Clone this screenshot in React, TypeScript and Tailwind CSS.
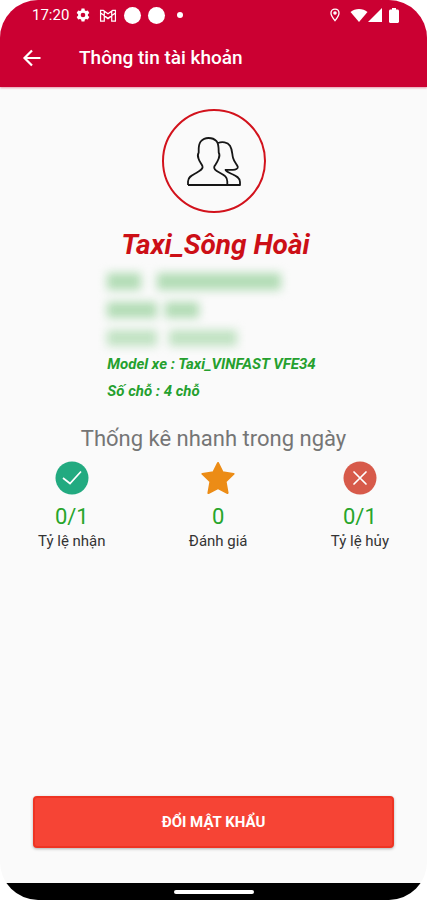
import type { ReactNode } from "react";

function StatusBar() {
  return (
    <div className="flex h-[30px] items-center pl-8 pr-7 text-white">
      <span className="text-[15px] leading-5">17:20</span>
      <svg viewBox="0 0 24 24" className="ml-[7px] h-[14px] w-[14px]" fill="currentColor">
        <path
          fillRule="evenodd"
          d="M9.500 1h5l.7 3.200 2 1.100 3.100-1 2.500 4.300-2.400 2.300v2.200l2.400 2.300-2.500 4.300-3.100-1-2 1.100-.7 3.200h-5l-.7-3.200-2-1.100-3.100 1-2.500-4.300 2.400-2.300v-2.200L1.200 8.600l2.500-4.300 3.100 1 2-1.100zM12 8a4 4 0 1 0 0 8 4 4 0 0 0 0-8z"
        />
      </svg>
      <svg viewBox="0 0 18 14" className="ml-[9px] h-[13px] w-[18px]" fill="none" stroke="currentColor" strokeWidth="1.300">
        <path d="M1 1.500v11.500h4V7.500l4 3 4-3V13h4V1.500h-3L9 5.200 4 1.500zM1.500 4.500 9 10l7.500-5.500M5 2.500v5M13 2.500v5" />
      </svg>
      <span className="ml-[7px] h-[17px] w-[17px] rounded-full bg-white" />
      <span className="ml-[7px] h-[17px] w-[17px] rounded-full bg-white" />
      <span className="ml-3 h-[6px] w-[6px] rounded-full bg-white" />

      <div className="ml-auto flex items-center">
        <svg viewBox="0 0 12 16" className="h-[14px] w-[12px]" fill="none" stroke="currentColor" strokeWidth="1.500">
          <path d="M6 1.200c-2.700 0-4.600 2-4.600 4.600C1.400 9 6 14.500 6 14.500S10.600 9 10.600 5.800c0-2.600-1.900-4.600-4.600-4.600z" />
          <circle cx="6" cy="5.800" r="1.300" fill="currentColor" />
        </svg>
        <svg viewBox="0 0 18 14" className="ml-[9px] h-[14px] w-[18px]" fill="currentColor">
          <path d="M.5 4C5 0 13 0 17.500 4L9 14z" />
        </svg>
        <svg viewBox="0 0 14 14" className="h-[14px] w-[14px]" fill="currentColor">
          <path d="M14 0v14H0z" />
        </svg>
        <svg viewBox="0 0 10 15" className="ml-[7px] h-[15px] w-[10px]" fill="currentColor">
          <path d="M3 0h4v1.500h1.500c.8 0 1.500.7 1.500 1.500v10.500c0 .8-.7 1.500-1.500 1.500h-7C.7 15 0 14.300 0 13.500V3c0-.8.700-1.500 1.500-1.500H3z" />
        </svg>
      </div>
    </div>
  );
}

function Avatar() {
  return (
    <div className="flex h-[104px] w-[104px] items-center justify-center rounded-full border-2 border-[#d2121c]">
      <svg viewBox="0 0 56 52" className="h-[52px] w-[56px]" fill="none" stroke="#161616" strokeWidth="1.800" strokeLinejoin="round">
        <path d="M2 50h52v-3c0-4.500-4-6.300-8-8-3-1.400-6-2.300-6.500-4.200h7.500c2.500 0 5.300-1 4.800-3-1-2.500-3.800-5-4.800-9-1-4-.5-8-3-12C41.500 7 36 6.500 32 8" />
        <path d="M2 50v-3.500c0-5 4.500-6.500 8.500-8.700 4-2.300 7-4 6-6.600-.8-2.200-3.200-4.700-4-7.700-.7-1.500-1-4 .2-6 0-5-.4-8 2-11 2.200-2.500 4.800-3.500 7.800-3.500 3 0 6 1 8 3.200 2.300 2.500 2.200 6.300 2.200 11.300 1.200 2 .7 4.500 0 6-1 3-2.900 5.500-4.400 8-1 2.500 1.500 4.300 5.500 6.300 4 2.200 7.500 3.700 7.500 8.700V50" />
      </svg>
    </div>
  );
}

function CheckIcon() {
  return (
    <svg viewBox="0 0 34 34" className="h-[34px] w-[34px]">
      <circle cx="17" cy="17" r="16.500" fill="#22aa80" />
      <path d="m8 17 7 5.500L26 10.500" fill="none" stroke="#fff" strokeWidth="1.700" />
    </svg>
  );
}

function StarIcon() {
  return (
    <svg viewBox="0 0 34 34" className="h-[34px] w-[34px]">
      <path
        d="m17 2 4.600 9.300 11 1.600-8 7.700 2 11.400L17 27.200 7.400 32l2-11.400-8-7.700 11-1.600z"
        fill="#ec8c16"
        stroke="#ec8c16"
        strokeWidth="2"
        strokeLinejoin="round"
      />
    </svg>
  );
}

function CrossIcon() {
  return (
    <svg viewBox="0 0 34 34" className="h-[34px] w-[34px]">
      <circle cx="17" cy="17" r="16.500" fill="#d75a4a" />
      <path d="m11 11 12 12M23 11 11 23" fill="none" stroke="#fff" strokeWidth="1.700" strokeLinecap="round" />
    </svg>
  );
}

function Stat({ icon, value, label }: { icon: ReactNode; value: string; label: string }) {
  return (
    <div className="flex flex-col items-center">
      {icon}
      <span className="mt-2 text-[22px] leading-7 text-[#27a52b]">{value}</span>
      <span className="text-[15px] leading-5 text-[#333]">{label}</span>
    </div>
  );
}

export default function App() {
  return (
    <div className="min-h-screen bg-white font-[Roboto,sans-serif]">
      <div className="flex min-h-screen flex-col overflow-hidden rounded-[38px] bg-[#fafafa]">
        <header className="bg-[#cb0032] text-white shadow-[0_1px_2px_rgba(203,0,50,0.4)]">
          <StatusBar />
          <div className="flex h-[57px] items-center pl-5">
            <button type="button" aria-label="Quay lại" className="flex h-6 w-6 items-center justify-center">
              <svg viewBox="0 0 20 20" className="h-5 w-5" fill="none" stroke="currentColor" strokeWidth="2.200">
                <path d="M18.500 9H2.500M10 1.500 2.500 9l7.500 7.500" />
              </svg>
            </button>
            <h1 className="ml-[35px] text-[19px] font-medium">Thông tin tài khoản</h1>
          </div>
        </header>

        <main className="flex flex-1 flex-col pt-[22px]">
          <section className="flex flex-col items-center">
            <Avatar />
            <h2 className="mt-4 pl-1 text-[28px] leading-8 font-bold text-[#cc0f16] italic">Taxi_Sông Hoài</h2>
            <div className="mt-3 flex flex-col pr-1 text-[15px] leading-[27px] font-bold text-[#25a02e] italic">
              <div aria-hidden="true" className="mb-[5px] flex flex-col gap-3 blur-[5px]">
                <div className="flex gap-4">
                  <span className="h-[17px] w-[34px] bg-[#b2dcb5]" />
                  <span className="h-[17px] w-[124px] bg-[#b2dcb5]" />
                </div>
                <div className="flex gap-2">
                  <span className="h-[16px] w-[50px] bg-[#b2dcb5]" />
                  <span className="h-[16px] w-[34px] bg-[#b2dcb5]" />
                </div>
                <div className="flex gap-3">
                  <span className="h-[16px] w-[50px] bg-[#c0e2c2]" />
                  <span className="h-[16px] w-[68px] bg-[#c0e2c2]" />
                </div>
              </div>
              <p>Model xe : Taxi_VINFAST VFE34</p>
              <p>Số chỗ : 4 chỗ</p>
            </div>
          </section>

          <section className="mt-5">
            <h3 className="text-center text-[22px] leading-7 text-[#757575]">Thống kê nhanh trong ngày</h3>
            <div className="mt-2 flex justify-between px-[38px]">
              <Stat icon={<CheckIcon />} value="0/1" label="Tỷ lệ nhận" />
              <Stat icon={<StarIcon />} value="0" label="Đánh giá" />
              <Stat icon={<CrossIcon />} value="0/1" label="Tỷ lệ hủy" />
            </div>
          </section>

          <div className="mt-auto px-[33px] pb-[35px]">
            <button
              type="button"
              className="h-[52px] w-full rounded border-2 border-[#ee3423] bg-[#f64435] text-[15px] font-bold text-white shadow-[0_1px_3px_rgba(0,0,0,0.3)]"
            >
              ĐỔI MẬT KHẨU
            </button>
          </div>
        </main>

        <footer className="flex h-[17px] items-center justify-center bg-black">
          <span className="h-1 w-20 rounded-full bg-white" />
        </footer>
      </div>
    </div>
  );
}
